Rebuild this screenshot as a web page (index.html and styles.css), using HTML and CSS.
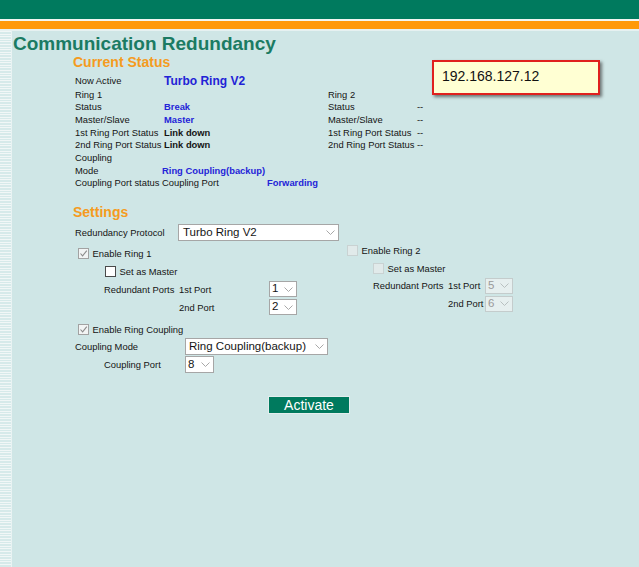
FILE: index.html
```html
<!DOCTYPE html>
<html>
<head>
<meta charset="utf-8">
<title>Communication Redundancy</title>
<link rel="stylesheet" href="styles.css">
</head>
<body>
<header class="topbar">
  <div class="bar-green"></div>
  <div class="bar-white"></div>
  <div class="bar-orange"></div>
  <div class="bar-light"></div>
</header>
<div class="page">
  <div class="side-strip"></div>
  <main class="content">
    <h1 class="title">Communication Redundancy</h1>

    <section class="section">
      <h2 class="section-title">Current Status</h2>
      <div class="status-grid">
        <span class="first">Now Active</span><span class="first val-big">Turbo Ring V2</span><span class="first"></span><span class="first"></span>
        <span>Ring 1</span><span></span><span>Ring 2</span><span></span>
        <span>Status</span><span class="val-blue">Break</span><span>Status</span><span>--</span>
        <span>Master/Slave</span><span class="val-blue">Master</span><span>Master/Slave</span><span>--</span>
        <span>1st Ring Port Status</span><span class="val-bold">Link down</span><span>1st Ring Port Status</span><span>--</span>
        <span>2nd Ring Port Status</span><span class="val-bold">Link down</span><span>2nd Ring Port Status</span><span>--</span>
      </div>
      <div class="coupling-grid">
        <span>Coupling</span><span></span><span></span>
        <span>Mode</span><span class="val-blue span2">Ring Coupling(backup)</span>
        <span>Coupling Port status</span><span>Coupling Port</span><span class="val-blue">Forwarding</span>
      </div>

      <h2 class="section-title settings-title">Settings</h2>
      <div class="form">
        <div class="frow h17">
          <span class="flabel w103">Redundancy Protocol</span>
          <div class="sel w161 h17 pl4"><span class="sel-text">Turbo Ring V2</span><svg class="chev" width="9" height="5" viewBox="0 0 9 5"><path d="M0.5 0.5 L4.5 4.5 L8.5 0.5" fill="none" stroke="#a8a8a8" stroke-width="1"/></svg></div>
        </div>

        <div class="rings">
          <div class="ring ring1">
            <div class="frow h18">
              <span class="cb cb-checked ml3"><svg width="9" height="9" viewBox="0 0 9 9"><path d="M1.5 4.5 L3.6 6.8 L7.8 1.6" fill="none" stroke="#8c8c8c" stroke-width="1.1"/></svg></span>
              <span class="cb-label">Enable Ring 1</span>
            </div>
            <div class="frow h18 pl30">
              <span class="cb cb-empty"></span>
              <span class="cb-label">Set as Master</span>
            </div>
            <div class="frow h18 pl29">
              <span class="flabel w75">Redundant Ports</span>
              <span class="flabel w90">1st Port</span>
              <div class="sel w28 h16 pl2"><span class="sel-text">1</span><svg class="chev" width="9" height="5" viewBox="0 0 9 5"><path d="M0.5 0.5 L4.5 4.5 L8.5 0.5" fill="none" stroke="#a8a8a8" stroke-width="1"/></svg></div>
            </div>
            <div class="frow h18 pl104">
              <span class="flabel w90">2nd Port</span>
              <div class="sel w28 h16 pl2"><span class="sel-text">2</span><svg class="chev" width="9" height="5" viewBox="0 0 9 5"><path d="M0.5 0.5 L4.5 4.5 L8.5 0.5" fill="none" stroke="#a8a8a8" stroke-width="1"/></svg></div>
            </div>
          </div>

          <div class="ring ring2">
            <div class="frow h18">
              <span class="cb cb-disabled"></span>
              <span class="cb-label">Enable Ring 2</span>
            </div>
            <div class="frow h18 pl26">
              <span class="cb cb-disabled"></span>
              <span class="cb-label">Set as Master</span>
            </div>
            <div class="frow h17 pl26">
              <span class="flabel w75">Redundant Ports</span>
              <span class="flabel w37">1st Port</span>
              <div class="sel sel-disabled w28 h16 pl2"><span class="sel-text">5</span><svg class="chev" width="9" height="5" viewBox="0 0 9 5"><path d="M0.5 0.5 L4.5 4.5 L8.5 0.5" fill="none" stroke="#b8c0c0" stroke-width="1"/></svg></div>
            </div>
            <div class="frow h17 pl101 mt1">
              <span class="flabel w37">2nd Port</span>
              <div class="sel sel-disabled w28 h16 pl2"><span class="sel-text">6</span><svg class="chev" width="9" height="5" viewBox="0 0 9 5"><path d="M0.5 0.5 L4.5 4.5 L8.5 0.5" fill="none" stroke="#b8c0c0" stroke-width="1"/></svg></div>
            </div>
          </div>
        </div>

        <div class="frow h17 mt5">
          <span class="cb cb-checked ml3"><svg width="9" height="9" viewBox="0 0 9 9"><path d="M1.5 4.5 L3.6 6.8 L7.8 1.6" fill="none" stroke="#8c8c8c" stroke-width="1.1"/></svg></span>
          <span class="cb-label">Enable Ring Coupling</span>
        </div>
        <div class="frow h17">
          <span class="flabel w110">Coupling Mode</span>
          <div class="sel w143 h17 pl3"><span class="sel-text">Ring Coupling(backup)</span><svg class="chev" width="9" height="5" viewBox="0 0 9 5"><path d="M0.5 0.5 L4.5 4.5 L8.5 0.5" fill="none" stroke="#a8a8a8" stroke-width="1"/></svg></div>
        </div>
        <div class="frow h17 pl29 mt1">
          <span class="flabel w81">Coupling Port</span>
          <div class="sel w29 h17 pl2"><span class="sel-text">8</span><svg class="chev" width="9" height="5" viewBox="0 0 9 5"><path d="M0.5 0.5 L4.5 4.5 L8.5 0.5" fill="none" stroke="#a8a8a8" stroke-width="1"/></svg></div>
        </div>

        <div class="actions">
          <button class="btn-activate" type="button">Activate</button>
        </div>
      </div>
    </section>
  </main>
</div>

<div class="ip-callout">192.168.127.12</div>
</body>
</html>
```

FILE: styles.css
```css
* { box-sizing: border-box; }

html, body {
  margin: 0;
  padding: 0;
}

body {
  font-family: "Liberation Sans", Arial, sans-serif;
  font-size: 9.4px;
  color: #141414;
  background: #cfe6e6;
}

/* top bars */
.topbar { display: flex; flex-direction: column; }
.bar-green { height: 19px; background: #007a5e; }
.bar-white { height: 2px; background: #f2f6f2; }
.bar-orange { height: 8px; background: #ff990a; }
.bar-light { height: 2px; background: #e6f1f1; }

.page {
  display: flex;
  min-height: calc(100vh - 31px);
}

.side-strip {
  flex: none;
  width: 12px;
  border-right: 1px solid #e9f3f3;
  background: repeating-linear-gradient(to bottom, #f1f7f7 0, #f1f7f7 1px, #d6eaea 1px, #d6eaea 2.6px);
}

.content {
  flex: 1;
  padding-top: 3px;
}

.title {
  margin: 0;
  padding-left: 1px;
  font-size: 19px;
  line-height: 19px;
  font-weight: bold;
  color: #1b7b63;
}

.section { padding-left: 60px; }

.section-title {
  margin: 2px 0 0 1px;
  font-size: 14px;
  line-height: 14px;
  font-weight: bold;
  color: #f59b20;
}

.settings-title { margin-top: 15px; }

/* status tables */
.status-grid {
  margin: 5px 0 0 3px;
  display: grid;
  grid-template-columns: 89px 164px 89px 60px;
  grid-template-rows: 14.5px repeat(5, 12.7px);
  white-space: nowrap;
}
.status-grid > span { line-height: 12.7px; }
.status-grid > span.first { line-height: 14.5px; }

.coupling-grid {
  margin-left: 3px;
  display: grid;
  grid-template-columns: 87px 105px 80px;
  grid-auto-rows: 12.7px;
  white-space: nowrap;
}
.coupling-grid > span { line-height: 12.7px; }
.span2 { grid-column: span 2; }

.val-big {
  font-size: 12px;
  font-weight: bold;
  color: #2222d6;
}
.val-blue { font-weight: bold; color: #2424d8; }
.val-bold { font-weight: bold; color: #141414; }

/* settings form */
.form {
  margin: 5px 0 0 3px;
  display: flex;
  flex-direction: column;
}

.frow {
  display: flex;
  align-items: center;
  white-space: nowrap;
}
.h16 { height: 16px; }
.h17 { height: 17px; }
.h18 { height: 18px; }
.mt1 { margin-top: 1px; }
.mt5 { margin-top: 5px; }
.ml3 { margin-left: 3px; }
.pl2 { padding-left: 2px; }
.pl3 { padding-left: 3px; }
.pl4 { padding-left: 4px; }
.pl26 { padding-left: 26px; }
.pl29 { padding-left: 29px; }
.pl30 { padding-left: 30px; }
.pl101 { padding-left: 101px; }
.pl104 { padding-left: 104px; }

.flabel { flex: none; }
.w37 { width: 37px; }
.w75 { width: 75px; }
.w81 { width: 81px; }
.w90 { width: 90px; }
.w103 { width: 103px; }
.w110 { width: 110px; }

.rings { display: flex; }
.ring { display: flex; flex-direction: column; }
.ring1 { width: 272px; padding-top: 3px; }
.ring2 { flex: 1; }

.cb {
  flex: none;
  width: 11px;
  height: 11px;
  display: flex;
  align-items: center;
  justify-content: center;
}
.cb-checked { border: 1px solid #a2a2a2; background: #f2f4f4; }
.cb-empty { border: 1px solid #4a4a4a; background: #ffffff; }
.cb-disabled { border: 1px solid #c9d2d2; background: #e1eaea; }
.cb-label { margin-left: 3.5px; }

.sel {
  flex: none;
  display: flex;
  align-items: center;
  border: 1px solid #a6a6a6;
  background: #ffffff;
  padding-right: 3px;
  font-size: 11.5px;
  color: #151515;
}
.sel-text { line-height: 1; }
.chev { margin-left: auto; flex: none; }
.sel-disabled {
  border-color: #c4cccc;
  background: #e6efef;
  color: #9a9a9a;
}
.w28 { width: 28px; }
.w29 { width: 29px; }
.w143 { width: 143px; }
.w161 { width: 161px; }

.actions {
  margin-top: 23px;
  padding-left: 193px;
}
.btn-activate {
  display: block;
  width: 82px;
  height: 18px;
  margin: 0;
  padding: 0;
  border: 1px solid #e4eeee;
  background: #007a5e;
  color: #ffffff;
  font-family: "Liberation Sans", Arial, sans-serif;
  font-size: 14px;
  line-height: 16px;
}

/* IP annotation callout */
.ip-callout {
  position: absolute;
  left: 432px;
  top: 60px;
  width: 168px;
  height: 35px;
  border: 2px solid #e0201e;
  background: #ffffd3;
  box-shadow: 2px 2px 3px rgba(40, 40, 40, 0.6);
  padding: 7px 0 0 8px;
  font-size: 14px;
  line-height: 14px;
  color: #111111;
}
```
